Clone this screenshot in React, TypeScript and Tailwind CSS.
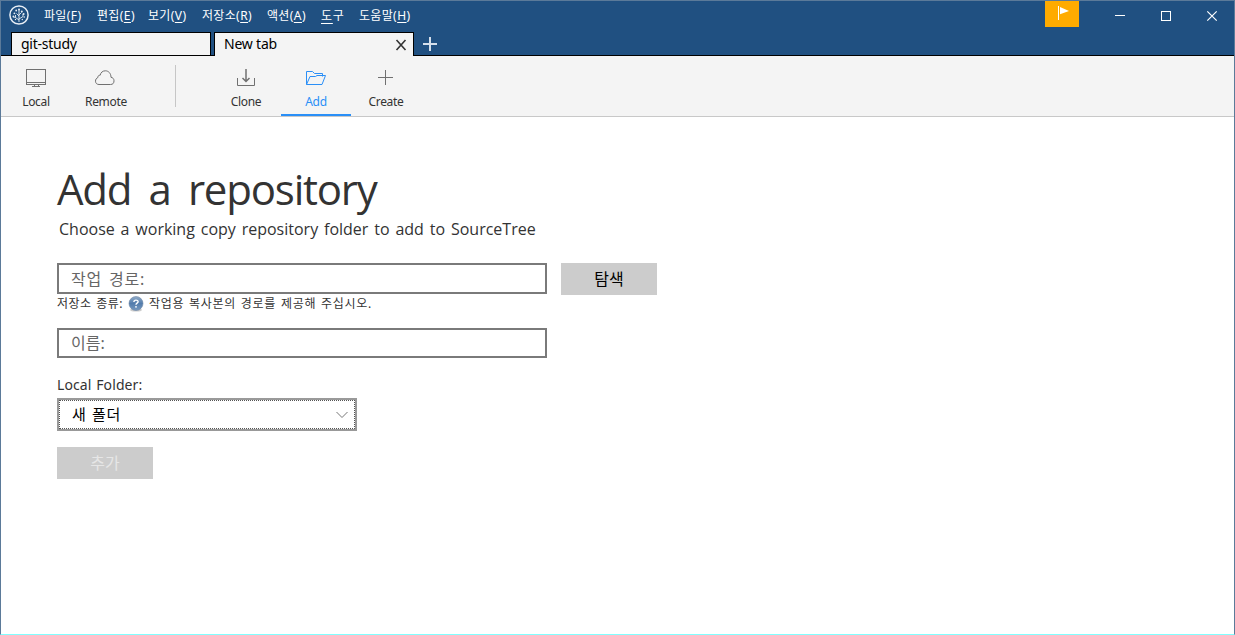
import React from "react";

const menus = [
  { label: "파일", key: "F", box: "w-[53px]" },
  { label: "편집", key: "E", box: "w-[51px]" },
  { label: "보기", key: "V", box: "w-[54px]" },
  { label: "저장소", key: "R", box: "w-[65px]" },
  { label: "액션", key: "A", box: "w-[54px]" },
  { label: "도구", key: "", box: "w-[38px]" },
  { label: "도움말", key: "H", box: "w-[60px]" },
];

function Logo() {
  return (
    <svg width="20" height="20" viewBox="0 0 20 20" fill="none" stroke="#e8eef5" className="shrink-0">
      <circle cx="10" cy="10" r="9.1" strokeWidth="1.5" />
      <path d="M10 17V5M10 15L6.500 12.500V10M10 14L14 11.500V9M10 11L7.500 8.500M10 10L12.500 7.500M6.500 12.500L4.500 12" strokeWidth="0.9" />
      <g fill="#e8eef5" stroke="none">
        <circle cx="10" cy="4.500" r="1" />
        <circle cx="7.200" cy="5.500" r=".9" />
        <circle cx="12.800" cy="6.500" r="1" />
        <circle cx="5.400" cy="8.300" r=".9" />
        <circle cx="14.600" cy="9" r="1" />
        <circle cx="4.400" cy="11.500" r=".9" />
        <circle cx="15.200" cy="12" r=".8" />
        <circle cx="6.500" cy="14.500" r=".7" />
        <circle cx="13.300" cy="14.500" r=".7" />
      </g>
    </svg>
  );
}

function MenuBar() {
  return (
    <div className="flex h-[31px] items-start">
      <div className="ml-2 mt-1">
        <Logo />
      </div>
      <div className="ml-[15px] mt-[6px] flex text-[12px] leading-[18px] text-white">
        {menus.map((m) => (
          <div key={m.label} className={`${m.box} whitespace-nowrap`}>
            {m.key ? (
              <>
                <span className="tracking-[0.3px]">{m.label}</span>
                <span className="tracking-[0.5px]">
                  (<span className="underline underline-offset-2">{m.key}</span>)
                </span>
              </>
            ) : (
              <span className="tracking-[0.8px]">
                <span className="underline underline-offset-[3px]">도</span>구
              </span>
            )}
          </div>
        ))}
      </div>
      <div className="ml-auto flex">
        <div className="h-[26px] w-[34px] bg-[#ffab00]">
          <svg width="34" height="26" viewBox="0 0 34 26" fill="#fff">
            <rect x="13" y="5" width="1" height="14" />
            <path d="M15 6L24 10L15 13.3Z" />
          </svg>
        </div>
        <svg width="155" height="30" viewBox="0 0 155 30" fill="none" stroke="#fff">
          <path d="M36 14.5H46" />
          <rect x="82.500" y="10.500" width="9" height="9" />
          <path d="M128.300 10.300L137.700 19.700M137.700 10.300L128.300 19.700" strokeWidth="1.200" />
        </svg>
      </div>
    </div>
  );
}

function TabStrip() {
  return (
    <div className="flex h-6 items-end border-b border-black text-[14px] leading-[22px] text-black">
      <div className="ml-[10px] h-[23px] w-[200px] shrink-0 border border-b-0 border-black bg-[#f4f4f4] pl-[9px]">
        <span className="tracking-[-0.25px]">git-study</span>
      </div>
      <div className="-mb-px ml-[3px] flex h-6 w-[200px] shrink-0 justify-between border border-b-0 border-black bg-[#f4f4f4] pl-[9px]">
        <span className="tracking-[-0.2px]">New tab</span>
        <svg width="12" height="12" viewBox="0 0 12 12" className="mr-[6px] mt-[6px]" stroke="#333" strokeWidth="1.600">
          <path d="M1.500 1L10.500 11M10.500 1L1.500 11" />
        </svg>
      </div>
      <svg width="14" height="14" viewBox="0 0 14 14" className="mb-1 ml-[9px]" stroke="#d5dfeb" strokeWidth="2">
        <path d="M7 0V14M0 7H14" />
      </svg>
    </div>
  );
}

const icons = {
  local: (
    <>
      <rect x="3.500" y="3.500" width="19" height="15" />
      <path d="M4 16.500H22M11.500 19V21M15.500 19V21M9 20.500H17" />
    </>
  ),
  remote: (
    <path d="M6 18.500H17.500C20 18.500 21 17 21 14.800C21 12.900 19.800 11.500 18 11.300C18 7.400 15.500 4.800 12.400 4.800C9.600 4.800 7.600 6.600 7.200 9.200C5.600 9 4.800 10.200 4.900 11.500C3.300 12.200 2.500 13.500 2.500 15.200C2.500 17.200 4 18.500 6 18.500Z" />
  ),
  clone: (
    <>
      <path d="M4.500 12V19.500H21.500V12" />
      <path d="M13 3V16M9.500 12L13 15.500L16.500 12" strokeWidth="1.500" />
    </>
  ),
  add: (
    <path d="M3.500 18.500V5.500H9.500L11.500 7.500H19.500V10.500M3.500 18.500L7 10.500H12.500L14 9.500H22.500L19 18.500H3.500" />
  ),
  create: <path d="M12.500 4V19M5 11.500H20" />,
};

function Tool({ icon, label, active = false }: { icon: keyof typeof icons; label: string; active?: boolean }) {
  return (
    <div
      className={`flex h-[60px] w-[70px] shrink-0 flex-col items-center border-b-2 pt-[10px] ${
        active ? "border-[#2a8ff7] text-[#2a8ff7]" : "border-transparent text-[#333]"
      }`}
    >
      <svg width="26" height="24" viewBox="0 0 26 24" fill="none" stroke={active ? "#2a8ff7" : "#707070"} className="shrink-0">
        {icons[icon]}
      </svg>
      <span className="mt-[3px] text-[12px] leading-[18px] tracking-[-0.3px]">{label}</span>
    </div>
  );
}

function Toolbar() {
  return (
    <div className="flex h-[61px] border-b border-[#c8c8c8] bg-[#f4f4f4]">
      <Tool icon="local" label="Local" />
      <Tool icon="remote" label="Remote" />
      <div className="ml-[34px] mr-[35px] mt-[9px] h-[42px] w-px bg-[#c6c6c6]" />
      <div className="flex">
        <Tool icon="clone" label="Clone" />
        <Tool icon="add" label="Add" active />
        <Tool icon="create" label="Create" />
      </div>
    </div>
  );
}

function HelpIcon() {
  return (
    <svg width="16" height="16" viewBox="0 0 16 16" className="ml-[5px] mr-[5px] mt-px shrink-0">
      <defs>
        <linearGradient id="help" x1="0" y1="0" x2="0" y2="1">
          <stop offset="0" stopColor="#91acc9" />
          <stop offset="0.500" stopColor="#537cac" />
          <stop offset="1" stopColor="#7799bf" />
        </linearGradient>
      </defs>
      <ellipse cx="8" cy="14" rx="6" ry="1.600" fill="#ccc" />
      <circle cx="8" cy="7.500" r="7" fill="url(#help)" stroke="#7088a4" strokeWidth=".6" />
      <path d="M5.900 6C5.900 3.500 10.100 3.500 10.100 5.800C10.100 7.200 8 7.200 8 8.800" fill="none" stroke="#fff" strokeWidth="1.400" />
      <circle cx="8" cy="10.800" r=".9" fill="#fff" />
    </svg>
  );
}

export default function App() {
  return (
    <div className="flex h-[635px] w-[1235px] flex-col overflow-hidden border border-[#5b7a99] border-b-[#80ffff] bg-white font-['Noto_Sans','Noto_Sans_CJK_KR',sans-serif]">
      <header className="shrink-0 bg-[#205081]">
        <MenuBar />
        <TabStrip />
      </header>
      <Toolbar />
      <main className="flex flex-col items-start pl-14 text-[#333]">
        <h1 className="mt-[42px] whitespace-nowrap font-['Open_Sans'] text-[42px] font-normal leading-[60px] tracking-[-1.2px] [word-spacing:7.500px]">
          Add a repository
        </h1>
        <p className="ml-[2px] mt-[-2px] whitespace-nowrap font-['Open_Sans'] text-[16px] leading-6 [word-spacing:1.700px]">
          Choose a working copy repository folder to add to SourceTree
        </p>
        <div className="mt-[22px] flex">
          <div className="h-[31px] w-[490px] border-2 border-[#7a7a7a] pl-3 text-[16px] leading-[28px] tracking-[0.8px] text-[#666] [word-spacing:2px]">
            작업 경로:
          </div>
          <button className="ml-[14px] h-8 w-24 bg-[#ccc] text-[16px] leading-8 text-black">탐색</button>
        </div>
        <div className="flex h-[18px] text-[12px] leading-[18px]">
          <span className="tracking-[0.5px] [word-spacing:1px]">저장소 종류:</span>
          <HelpIcon />
          <span className="whitespace-nowrap tracking-[0.7px] [word-spacing:1px]">작업용 복사본의 경로를 제공해 주십시오.</span>
        </div>
        <div className="mt-[15px] h-[30px] w-[490px] border-2 border-[#7a7a7a] pl-3 text-[16px] leading-[26px] text-[#666]">이름:</div>
        <div className="mt-4 text-[14px] leading-[22px] tracking-[0.1px] [word-spacing:1px]">Local Folder:</div>
        <div className="mt-[2px] h-[33px] w-[300px] border-2 border-[#999]">
          <div className="flex h-[29px] justify-between border border-dotted border-[#555] pl-[12px] pr-[6px] text-[15px] leading-[26px] tracking-[0.7px] text-black [word-spacing:1px]">
            <span>새 폴더</span>
            <svg width="12" height="8" viewBox="0 0 12 8" className="mt-[10px]" fill="none" stroke="#777">
              <path d="M.5 1L6 6.500L11.500 1" />
            </svg>
          </div>
        </div>
        <button className="mt-4 h-8 w-24 bg-[#ccc] text-[16px] leading-8 text-[#e6e6e6]">추가</button>
      </main>
    </div>
  );
}
